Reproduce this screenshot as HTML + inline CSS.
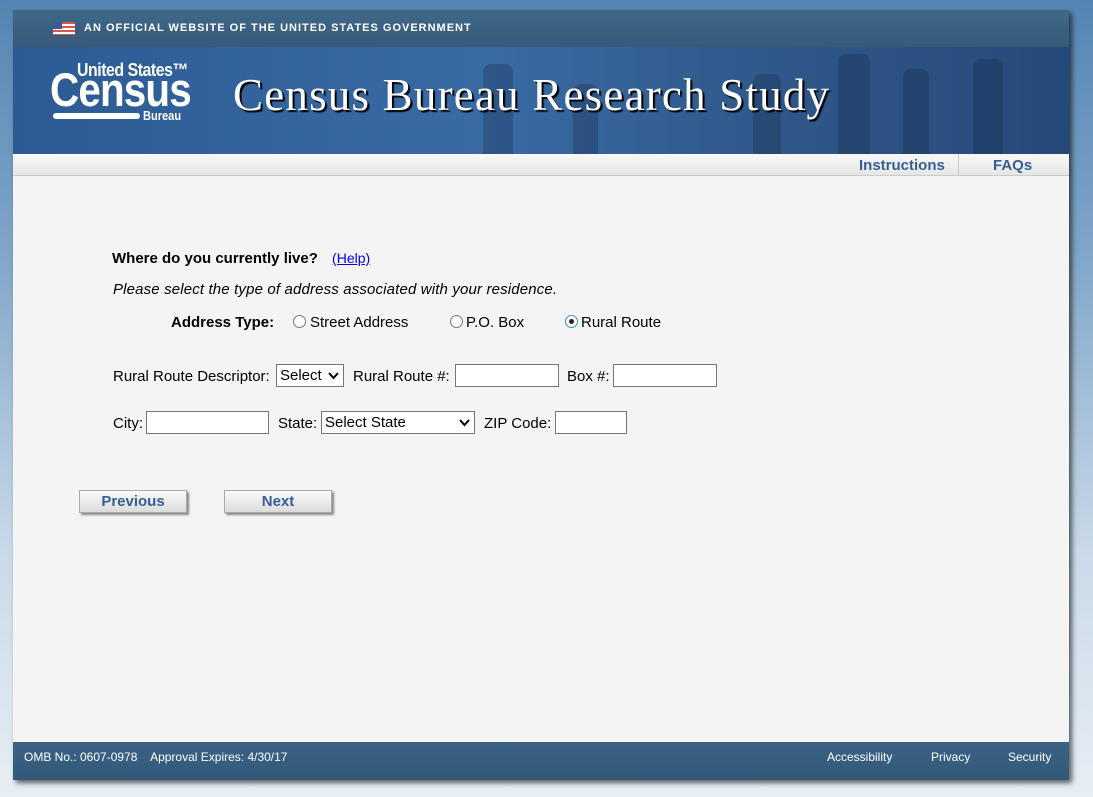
<!DOCTYPE html>
<html><head><style>
*{margin:0;padding:0;box-sizing:border-box}
body{width:1093px;height:797px;overflow:hidden;font-family:"Liberation Sans",Arial,sans-serif;background:linear-gradient(#5585b3 0px,#7fa5c8 250px,#c9d9e8 550px,#e7eef5 797px);position:relative}
#panel{position:absolute;left:13px;top:10px;width:1056px;height:770px;background:#f4f4f4;box-shadow:3px 3px 5px rgba(0,0,0,.6)}
#gov{height:37px;background:linear-gradient(#3f6888,#365a7b);color:#fff;font-size:11px;font-weight:bold;letter-spacing:1px;position:relative}
#gov span{position:absolute;left:71px;top:12px}
#flag{position:absolute;left:40px;top:12px;width:22px;height:13px;background:repeating-linear-gradient(#d9534f 0 2px,#fff 2px 4px)}
#flag:before{content:"";position:absolute;left:0;top:0;width:9px;height:7px;background:#3b5998}
#banner{height:107px;background:linear-gradient(90deg,#2c5b94 0%,#3a6aa4 45%,#2e5687 75%,#26497a 100%);position:relative;overflow:hidden}
#banner .fig{position:absolute;bottom:0;background:rgba(20,40,70,.3);border-radius:8px 8px 0 0}
#logo{position:absolute;left:0;top:0;color:#fff}
#logo .us{position:absolute;left:64px;top:13px;font-size:18px;font-weight:bold;white-space:nowrap;letter-spacing:-.5px;transform:scaleX(.88);transform-origin:left}
#logo .c{position:absolute;left:37px;top:19px;font-size:47px;line-height:47px;font-weight:bold;letter-spacing:-1px;transform:scaleX(.86);transform-origin:left;white-space:nowrap}
#logo .bar{position:absolute;left:40px;top:66px;width:87px;height:6px;background:#fff;border-radius:3px}
#logo .b{position:absolute;left:130px;top:61px;font-size:13px;font-weight:bold;transform:scaleX(.85);transform-origin:left}
#title{position:absolute;left:220px;top:22px;font-family:"Liberation Serif",serif;font-size:45px;color:#fff;text-shadow:2px 2px 1px #000;letter-spacing:1.2px;white-space:nowrap}
#nav{height:22px;background:linear-gradient(#f8f8f8,#e6e6e6);border-bottom:1px solid #ccc;position:relative;font-size:15px;font-weight:bold;color:#345f92}
#nav .i{position:absolute;left:846px;top:3px}
#nav .sep{position:absolute;left:945px;top:0;width:1px;height:22px;background:#ccc}
#nav .f{position:absolute;left:980px;top:3px}
.t{position:absolute;font-size:15px;color:#000;white-space:nowrap}
.inp{position:absolute;height:23px;background:#fff;border:1px solid #767676}
.sel{position:absolute;height:23px;background:#fff;border:1px solid #767676;font-size:15px;padding:2px 3px}
.sel svg{position:absolute;right:4px;top:7px}
.radio{position:absolute;width:13px;height:13px;border:1px solid #777;border-radius:50%;background:#fff}
.radio.on{border-color:#3a8ad0}
.radio.on:after{content:"";position:absolute;left:3px;top:3px;width:5px;height:5px;border-radius:50%;background:#222}
.btn{position:absolute;top:480px;width:108px;height:23px;background:linear-gradient(#fafafa,#dcdcdc);border:1px solid #aaa;box-shadow:2px 2px 2px #888;color:#345f92;font-weight:bold;font-size:15px;text-align:center;line-height:21px}
#foot{position:absolute;left:0;top:732px;width:1056px;height:38px;background:linear-gradient(#3b6384,#33597a);color:#fff;font-size:12px}
#foot span{position:absolute;top:8px}
</style></head><body>
<div id="panel">
<div id="gov"><div id="flag"></div><span>AN OFFICIAL WEBSITE OF THE UNITED STATES GOVERNMENT</span></div>
<div id="banner">
<div class="fig" style="left:470px;width:30px;height:90px"></div>
<div class="fig" style="left:560px;width:25px;height:70px"></div>
<div class="fig" style="left:740px;width:28px;height:80px"></div>
<div class="fig" style="left:825px;width:32px;height:100px"></div>
<div class="fig" style="left:890px;width:26px;height:85px"></div>
<div class="fig" style="left:960px;width:30px;height:95px"></div>
<div id="logo"><div class="us">United States™</div><div class="c">Census</div><div class="bar"></div><div class="b">Bureau</div></div>
<div id="title">Census Bureau Research Study</div>
</div>
<div id="nav"><span class="i">Instructions</span><div class="sep"></div><span class="f">FAQs</span></div>
<div class="t" style="left:99px;top:240px;font-weight:bold">Where do you currently live? <span style="font-weight:normal;font-size:14px;color:#00e;text-decoration:underline;margin-left:10px">(Help)</span></div>
<div class="t" style="left:100px;top:271px;font-style:italic;letter-spacing:.15px">Please select the type of address associated with your residence.</div>
<div class="t" style="left:158px;top:304px;font-weight:bold">Address Type:</div>
<div class="radio" style="left:280px;top:305px"></div><div class="t" style="left:297px;top:304px">Street Address</div>
<div class="radio" style="left:437px;top:305px"></div><div class="t" style="left:453px;top:304px">P.O. Box</div>
<div class="radio on" style="left:552px;top:305px"></div><div class="t" style="left:568px;top:304px">Rural Route</div>
<div class="t" style="left:100px;top:358px">Rural Route Descriptor:</div>
<div class="sel" style="left:263px;top:354px;width:68px">Select<svg width="11" height="8"><path d="M1 1l4.5 5L10 1" stroke="#000" stroke-width="2" fill="none"/></svg></div>
<div class="t" style="left:340px;top:358px">Rural Route #:</div>
<div class="inp" style="left:442px;top:354px;width:104px"></div>
<div class="t" style="left:554px;top:358px">Box #:</div>
<div class="inp" style="left:600px;top:354px;width:104px"></div>
<div class="t" style="left:100px;top:405px">City:</div>
<div class="inp" style="left:133px;top:401px;width:123px"></div>
<div class="t" style="left:265px;top:405px">State:</div>
<div class="sel" style="left:308px;top:401px;width:154px">Select State<svg width="11" height="8"><path d="M1 1l4.5 5L10 1" stroke="#000" stroke-width="2" fill="none"/></svg></div>
<div class="t" style="left:471px;top:405px">ZIP Code:</div>
<div class="inp" style="left:542px;top:401px;width:72px"></div>
<div class="btn" style="left:66px">Previous</div>
<div class="btn" style="left:211px">Next</div>
<div id="foot"><span style="left:11px">OMB No.: 0607-0978 &nbsp;&nbsp; Approval Expires: 4/30/17</span><span style="left:814px">Accessibility</span><span style="left:918px">Privacy</span><span style="left:995px">Security</span></div>
</div>
</body></html>
